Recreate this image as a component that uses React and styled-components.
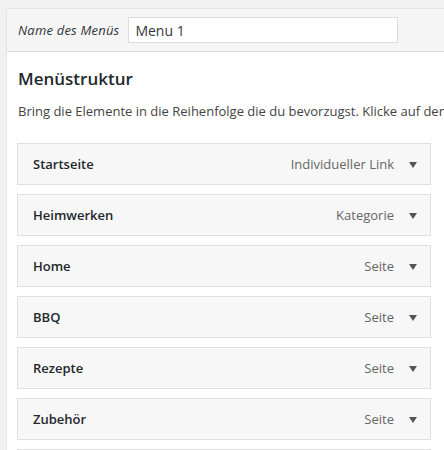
import React from "react";
import styled, { createGlobalStyle } from "styled-components";

const Global = createGlobalStyle`
  html, body {
    margin: 0;
    padding: 0;
    background: #f1f1f1;
    overflow: hidden;
  }
  body {
    font-family: "Open Sans", "Noto Sans", sans-serif;
    color: #23282d;
  }
`;

const Page = styled.div`
  padding: 8px 0 0 6px;
`;

const Panel = styled.div`
  width: 480px;
  border-top: 1px solid #e5e5e5;
  border-left: 1px solid #e5e5e5;
  background: #fff;
`;

const Header = styled.div`
  display: flex;
  align-items: center;
  height: 42px;
  padding: 0 11px;
  background: #f5f5f5;
  border-bottom: 1px solid #dfdfdf;
`;

const NameLabel = styled.label`
  font-size: 13px;
  font-style: italic;
  color: #32373c;
  margin-right: 9px;
  letter-spacing: 0.2px;
`;

const NameInput = styled.input`
  box-sizing: border-box;
  width: 270px;
  height: 26px;
  padding: 0 6px;
  border: 1px solid #ddd;
  background: #fff;
  font-family: "Open Sans", "Noto Sans", sans-serif;
  font-size: 14px;
  color: #32373c;
  outline: none;
`;

const Body = styled.div`
  padding: 15px 0 0 10px;
`;

const Title = styled.h3`
  margin: 0;
  font-size: 17px;
  font-weight: 600;
  line-height: 24px;
  color: #23282d;
  padding-left: 1px;
`;

const Hint = styled.p`
  margin: 10px 0 0 1px;
  font-size: 13px;
  line-height: 20px;
  color: #444;
  white-space: nowrap;
`;

const ItemList = styled.ul`
  list-style: none;
  margin: 22px 0 0;
  padding: 0;
  width: 414px;
  display: flex;
  flex-direction: column;
  gap: 9px;
`;

const Item = styled.li`
  box-sizing: border-box;
  height: 42px;
  display: flex;
  align-items: center;
  padding: 0 13px 0 15px;
  background: #f7f7f7;
  border: 1px solid #dfdfdf;
`;

const ItemTitle = styled.span`
  flex: 1;
  font-size: 13px;
  font-weight: 600;
  color: #23282d;
`;

const ItemType = styled.span`
  font-size: 13px;
  color: #666;
  margin-right: 15px;
`;

const Toggle = styled.span`
  width: 0;
  height: 0;
  border-left: 4px solid transparent;
  border-right: 4px solid transparent;
  border-top: 6px solid #555;
  margin-top: 1px;
`;

const items = [
  { title: "Startseite", type: "Individueller Link" },
  { title: "Heimwerken", type: "Kategorie" },
  { title: "Home", type: "Seite" },
  { title: "BBQ", type: "Seite" },
  { title: "Rezepte", type: "Seite" },
  { title: "Zubehör", type: "Seite" },
  { title: "Grillen", type: "Seite" },
];

export default function App() {
  return (
    <>
      <Global />
      <Page>
        <Panel>
          <Header>
            <NameLabel htmlFor="menu-name">Name des Menüs</NameLabel>
            <NameInput id="menu-name" defaultValue="Menu 1" />
          </Header>
          <Body>
            <Title>Menüstruktur</Title>
            <Hint>
              Bring die Elemente in die Reihenfolge die du bevorzugst. Klicke auf den Pfeil rechts neben dem Element, um weitere Optionen anzuzeigen.
            </Hint>
            <ItemList>
              {items.map((it) => (
                <Item key={it.title}>
                  <ItemTitle>{it.title}</ItemTitle>
                  <ItemType>{it.type}</ItemType>
                  <Toggle />
                </Item>
              ))}
            </ItemList>
          </Body>
        </Panel>
      </Page>
    </>
  );
}
